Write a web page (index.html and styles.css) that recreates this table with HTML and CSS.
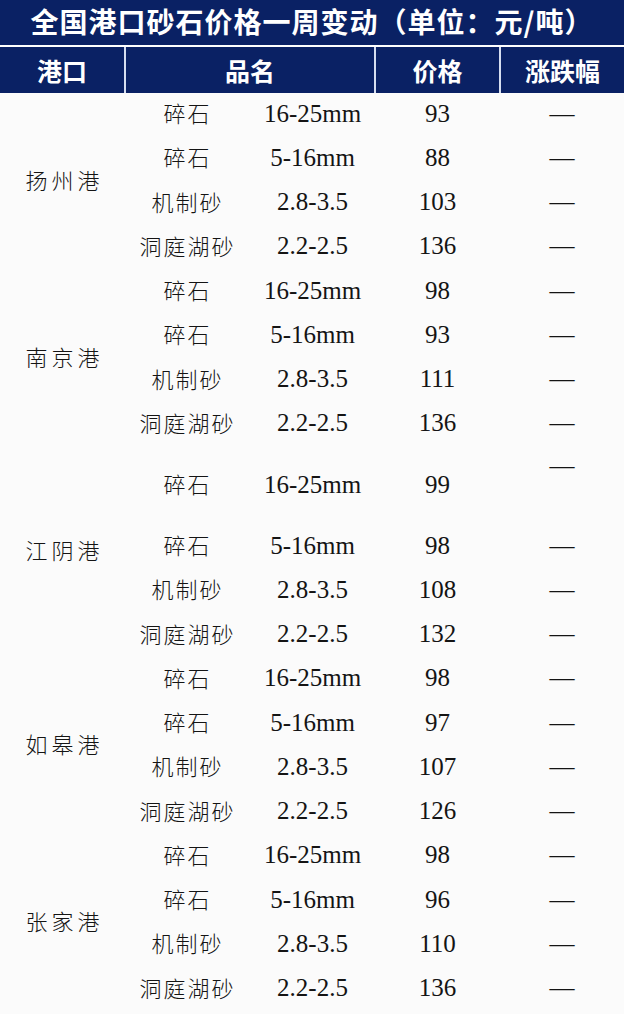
FILE: index.html
```html
<!DOCTYPE html>
<html lang="zh-CN">
<head>
<meta charset="utf-8">
<title>全国港口砂石价格一周变动</title>
<link rel="stylesheet" href="styles.css">
</head>
<body>
<div class="sheet">
  <div class="title">全国港口砂石价格一周变动（单位：元/吨）</div>
  <table class="grid">
    <colgroup>
      <col class="c1"><col class="c2"><col class="c3"><col class="c4"><col class="c5">
    </colgroup>
    <thead>
      <tr class="head">
        <th>港口</th>
        <th colspan="2">品名</th>
        <th>价格</th>
        <th>涨跌幅</th>
      </tr>
    </thead>
    <tbody>
      <tr><td class="port" rowspan="4">扬州港</td><td class="name">碎石</td><td class="num">16-25mm</td><td class="num">93</td><td class="num">—</td></tr>
      <tr><td class="name">碎石</td><td class="num">5-16mm</td><td class="num">88</td><td class="num">—</td></tr>
      <tr><td class="name">机制砂</td><td class="num">2.8-3.5</td><td class="num">103</td><td class="num">—</td></tr>
      <tr><td class="name">洞庭湖砂</td><td class="num">2.2-2.5</td><td class="num">136</td><td class="num">—</td></tr>

      <tr><td class="port" rowspan="4">南京港</td><td class="name">碎石</td><td class="num">16-25mm</td><td class="num">98</td><td class="num">—</td></tr>
      <tr><td class="name">碎石</td><td class="num">5-16mm</td><td class="num">93</td><td class="num">—</td></tr>
      <tr><td class="name">机制砂</td><td class="num">2.8-3.5</td><td class="num">111</td><td class="num">—</td></tr>
      <tr><td class="name">洞庭湖砂</td><td class="num">2.2-2.5</td><td class="num">136</td><td class="num">—</td></tr>

      <tr class="tall"><td class="port" rowspan="4">江阴港</td><td class="name">碎石</td><td class="num">16-25mm</td><td class="num">99</td><td class="num top">—</td></tr>
      <tr><td class="name">碎石</td><td class="num">5-16mm</td><td class="num">98</td><td class="num">—</td></tr>
      <tr><td class="name">机制砂</td><td class="num">2.8-3.5</td><td class="num">108</td><td class="num">—</td></tr>
      <tr><td class="name">洞庭湖砂</td><td class="num">2.2-2.5</td><td class="num">132</td><td class="num">—</td></tr>

      <tr><td class="port" rowspan="4">如皋港</td><td class="name">碎石</td><td class="num">16-25mm</td><td class="num">98</td><td class="num">—</td></tr>
      <tr><td class="name">碎石</td><td class="num">5-16mm</td><td class="num">97</td><td class="num">—</td></tr>
      <tr><td class="name">机制砂</td><td class="num">2.8-3.5</td><td class="num">107</td><td class="num">—</td></tr>
      <tr><td class="name">洞庭湖砂</td><td class="num">2.2-2.5</td><td class="num">126</td><td class="num">—</td></tr>

      <tr><td class="port" rowspan="4">张家港</td><td class="name">碎石</td><td class="num">16-25mm</td><td class="num">98</td><td class="num">—</td></tr>
      <tr><td class="name">碎石</td><td class="num">5-16mm</td><td class="num">96</td><td class="num">—</td></tr>
      <tr><td class="name">机制砂</td><td class="num">2.8-3.5</td><td class="num">110</td><td class="num">—</td></tr>
      <tr><td class="name">洞庭湖砂</td><td class="num">2.2-2.5</td><td class="num">136</td><td class="num">—</td></tr>
    </tbody>
  </table>
</div>
</body>
</html>
```

FILE: styles.css
```css
html, body {
  margin: 0;
  padding: 0;
  background: #fbfbfb;
}

.sheet {
  width: 624px;
  height: 1014px;
  overflow: hidden;
  background: #fbfbfb;
}

.title {
  height: 45px;
  background: #0a2164;
  color: #ffffff;
  font-family: "Noto Sans CJK SC", sans-serif;
  font-weight: 700;
  font-size: 28px;
  line-height: 43px;
  text-align: center;
  letter-spacing: 1px;
  border-bottom: 2px solid #ffffff;
}

.grid {
  width: 624px;
  border-collapse: collapse;
  table-layout: fixed;
}

.c1, .c2, .c3, .c4 { width: 125px; }
.c5 { width: 124px; }

.head th {
  height: 46px;
  padding: 0;
  background: #0a2164;
  color: #ffffff;
  font-family: "Noto Sans CJK SC", sans-serif;
  font-weight: 700;
  font-size: 25px;
  line-height: 44px;
  text-align: center;
  border-left: 2px solid #d6def0;
}

.head th:first-child { border-left: none; }

tbody tr { height: 44.25px; }
tbody tr.tall { height: 78px; }

tbody td {
  padding: 0 0 3px 0;
  text-align: center;
  vertical-align: middle;
  color: #141414;
}

.port, .name {
  font-family: "Noto Sans CJK SC", sans-serif;
  font-weight: 300;
  font-size: 22px;
  letter-spacing: 2px;
}

.name { padding-bottom: 6px; }

.port {
  letter-spacing: 4px;
  padding-left: 4px;
  padding-bottom: 6px;
}

.num {
  font-family: "Liberation Serif", serif;
  font-size: 25px;
}

.num.top {
  vertical-align: top;
  padding-top: 5px;
}
```
